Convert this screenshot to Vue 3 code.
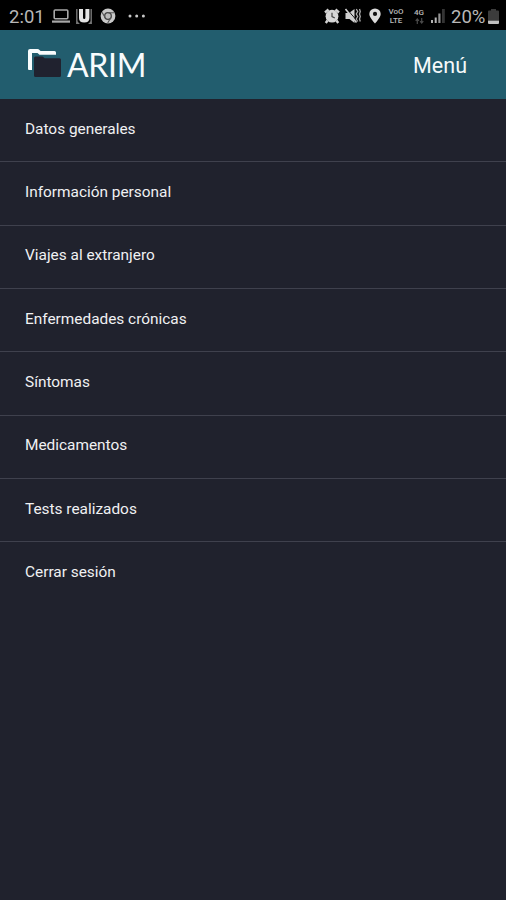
<script setup>
const items = [
  'Datos generales',
  'Información personal',
  'Viajes al extranjero',
  'Enfermedades crónicas',
  'Síntomas',
  'Medicamentos',
  'Tests realizados',
  'Cerrar sesión',
]
</script>

<template>
  <div class="screen">
    <div class="status">
      <div class="left">
        <span class="clock">2:01</span>
        <svg class="laptop" width="18" height="14" viewBox="0 0 18 14" fill="none" stroke="#a8a8a8" stroke-width="1.6">
          <rect x="2.200" y="1" width="13.600" height="8.8" rx="1" />
          <path d="M0 12.6H18" stroke-width="2.2" />
        </svg>
        <svg class="mark" width="16" height="15" viewBox="0 0 16 15">
          <path d="M0.8 0V15M15.200 0V15" stroke="#777" stroke-width="1.400" />
          <path d="M1 12L4 15H0.500ZM15 12L12 15H15.500Z" fill="#777" />
          <path d="M3 0H7V8.500Q7 10 8.200 10Q9.400 10 9.400 8.500V0H13.400V9Q13.400 13.500 8.200 13.500Q3 13.500 3 9Z" fill="#e4e4e4" />
        </svg>
        <svg class="chrome" width="16" height="16" viewBox="0 0 16 16">
          <circle cx="8" cy="8" r="7.400" fill="#c8c8c8" />
          <circle cx="8" cy="8" r="3.300" fill="#bbb" stroke="#444" stroke-width="1.300" />
          <path d="M8 4.700H14.500M5.200 9.700L2 4.200M10.800 9.700L7.700 15" stroke="#555" stroke-width="1.100" />
        </svg>
        <svg width="18" height="4" viewBox="0 0 18 4" fill="#c8c8c8">
          <circle cx="2" cy="2" r="1.500" /><circle cx="8.700" cy="2" r="1.500" /><circle cx="15.400" cy="2" r="1.500" />
        </svg>
      </div>
      <div class="right">
        <svg class="alarm" width="16" height="16" viewBox="0 0 16 16">
          <path d="M1 4.500L4.500 1.500M15 4.500L11.500 1.500M3.500 12.500L1.800 15M12.500 12.500L14.200 15" stroke="#d2d2d2" stroke-width="2.400" />
          <circle cx="8" cy="8.200" r="6.400" fill="#d6d6d6" />
          <path d="M8 4.800V8.600L10.800 10" fill="none" stroke="#444" stroke-width="1.200" />
        </svg>
        <svg class="mute" width="16" height="16" viewBox="0 0 16 16">
          <path d="M0.500 5H4L9.500 1V15L4.500 11H0.500Z" fill="#cfcfcf" />
          <path d="M1.500 0.500L12 13" stroke="#000" stroke-width="1" />
          <path d="M0.500 1L11.500 14.500" stroke="#cfcfcf" stroke-width="1.600" />
          <path d="M11.300 1L12.700 3.500L11.300 6L12.700 8.500L11.300 11L12.700 13.500M14.500 1L15.300 3.500L14.500 6L15.300 8.500L14.500 11L15.300 13.500" fill="none" stroke="#aaa" stroke-width="1.300" />
        </svg>
        <svg class="pin" width="12" height="16" viewBox="0 0 12 16">
          <path d="M6 0.500A5.700 5.500 0 0 0 0.300 6C0.300 9.500 6 15.500 6 15.500S11.700 9.500 11.700 6A5.700 5.500 0 0 0 6 0.500Z" fill="#dcdcdc" />
          <circle cx="6" cy="5.900" r="2.100" fill="#111" />
        </svg>
        <div class="volte"><span>VoO</span><span>LTE</span></div>
        <div class="net">
          <span>4G</span>
          <svg width="9" height="6" viewBox="0 0 9 6" fill="none" stroke="#4a4a4a" stroke-width="1.200">
            <path d="M2.300 6V1M0.700 2.800L2.300 1L3.900 2.800M6.700 0V5M5.100 3.200L6.700 5L8.300 3.200" />
          </svg>
        </div>
        <svg class="signal" width="14" height="14" viewBox="0 0 14 14">
          <path d="M0 11H2V14H0Z M3.700 8.500H5.700V14H3.700Z" fill="#b4b4b4" />
          <path d="M7.300 4.500H9.500V14H7.300Z" fill="#929292" />
          <path d="M11 0H13.800V14H11Z" fill="#343434" />
        </svg>
        <span class="percent">20%</span>
        <svg class="battery" width="11" height="15" viewBox="0 0 11 15">
          <path d="M3 0H8V1.500H10Q11 1.500 11 2.500V11H0V2.500Q0 1.500 1 1.500H3Z" fill="#3c3c3c" />
          <path d="M0 11.500H11V14Q11 15 10 15H1Q0 15 0 14Z" fill="#c0c0c0" />
        </svg>
      </div>
    </div>
    <header class="header">
      <div class="brand">
        <svg class="folder" width="35" height="30" viewBox="0 0 35 30">
          <path d="M0 2Q0 0 2 0H9.500Q10.700 0 11.500 1L12.600 2H26.500Q28 2 28 3.500V5.700H11.500L9.500 4H4V21H1Q0 21 0 20Z" fill="#f8fcfd" />
          <path d="M6 9Q6 7.500 7.500 7.500H14Q15 7.500 15.800 8.400L16.600 9.300H31.500Q33 9.300 33 10.800V26.500Q33 28 31.500 28H7.500Q6 28 6 26.500Z" fill="#20222f" />
        </svg>
        <span class="name">ARIM</span>
      </div>
      <span class="title">Menú</span>
    </header>
    <nav class="menu">
      <a v-for="item in items" :key="item" class="item"><span>{{ item }}</span></a>
    </nav>
  </div>
</template>

<style>
body {
  margin: 0;
  background: #20222d;
}
</style>

<style scoped>
.screen {
  width: 506px;
  height: 900px;
  overflow: hidden;
  background: #20222d;
  color: #f0f1f3;
  font-family: Roboto, "Liberation Sans", sans-serif;
  display: flex;
  flex-direction: column;
}
.status {
  height: 30px;
  flex: none;
  box-sizing: border-box;
  padding: 2px 7px 0 9px;
  background: #000;
  color: #b8b8b8;
  display: flex;
  justify-content: space-between;
}
.left,
.right {
  display: flex;
  align-items: center;
}
svg {
  display: block;
  flex: none;
}
.clock {
  width: 43px;
  padding-top: 1px;
  font-size: 18.5px;
}
.mark { margin-left: 6px; }
.chrome { margin: 0 12px 0 8px; }
.mute { margin-left: 5px; }
.pin { margin: 0 7px 0 8px; }
.volte,
.net {
  display: flex;
  flex-direction: column;
  align-items: center;
  font-size: 8px;
  line-height: 8px;
  font-weight: 500;
}
.volte {
  width: 16px;
  line-height: 9px;
}
.net {
  width: 14px;
  margin-left: 8px;
  gap: 1px;
}
.signal { margin: 0 6px 0 5px; }
.percent {
  width: 37px;
  padding-top: 1px;
  font-size: 18.5px;
}
.header {
  height: 69px;
  flex: none;
  box-sizing: border-box;
  padding: 0 39px 0 28px;
  background: #225d6e;
  display: flex;
  align-items: center;
  justify-content: space-between;
}
.brand {
  display: flex;
  align-items: center;
}
.folder {
  margin-top: -2px;
}
.name {
  margin-left: 4px;
  font-family: Lato, sans-serif;
  font-size: 32px;
  line-height: 40px;
  letter-spacing: -0.3px;
  color: #f8fcfd;
}
.title {
  padding-top: 2px;
  font-size: 21.5px;
  color: #f5f9fa;
}
.menu {
  display: flex;
  flex-direction: column;
}
.item {
  height: 63.33px;
  box-sizing: border-box;
  padding: 0 25px 3px;
  display: flex;
  align-items: center;
  border-bottom: 1px solid #3f414d;
  font-size: 15.4px;
}
.item:last-child {
  border-bottom: 0;
}
</style>
